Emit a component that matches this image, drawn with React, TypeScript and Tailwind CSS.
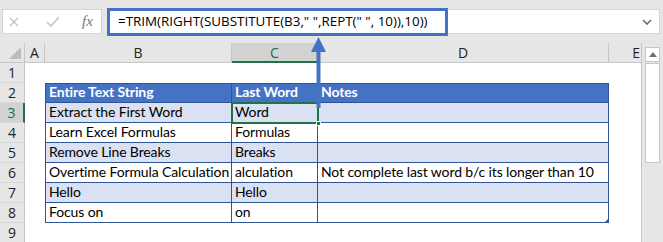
import React from "react";

type Row = {
  n: number;
  b?: string;
  c?: string;
  d?: string;
  head?: boolean;
  alt?: boolean;
};

const rows: Row[] = [
  { n: 1 },
  { n: 2, b: "Entire Text String", c: "Last Word", d: "Notes", head: true },
  { n: 3, b: "Extract the First Word", c: "Word", d: "", alt: true },
  { n: 4, b: "Learn Excel Formulas", c: "Formulas", d: "" },
  { n: 5, b: "Remove Line Breaks", c: "Breaks", d: "", alt: true },
  { n: 6, b: "Overtime Formula Calculation", c: "alculation", d: "Not complete last word b/c its longer than 10" },
  { n: 7, b: "Hello", c: "Hello", d: "", alt: true },
  { n: 8, b: "Focus on", c: "on", d: "" },
  { n: 9 },
];

function TableCell({ row, text, width, first }: { row: Row; text?: string; width: string; first?: boolean }) {
  if (text === undefined) return <div className={`${width} shrink-0`} />;
  const bg = row.head ? "bg-[#4472c4] text-white font-bold" : row.alt ? "bg-[#d9e1f2] text-black" : "bg-white text-black";
  return (
    <div
      className={`${width} shrink-0 h-full overflow-hidden whitespace-nowrap border-b border-r border-[#2f5597] ${first ? "border-l" : ""} ${row.head ? "border-t" : ""} ${bg} pl-[3px] flex items-end pb-[1px] text-[14px] tracking-[-0.12px] leading-[18px]`}
      style={{ fontFamily: "Lato, 'Liberation Sans', sans-serif" }}
    >
      {text}
    </div>
  );
}

export default function App() {
  return (
    <div className="relative w-[663px] h-[242px] overflow-hidden bg-[#e6e6e6] font-['Open_Sans',sans-serif]">
      {/* formula bar */}
      <div className="flex pt-[9px] pl-[2px] h-[43px]">
        <div className="w-[100px] h-[25px] bg-white border border-[#d6d6d6] flex items-center">
          <svg width="10" height="10" viewBox="0 0 10 10" className="ml-[6px]">
            <path d="M1 1L9 9M9 1L1 9" stroke="#c4c4c4" strokeWidth="1.4" />
          </svg>
          <svg width="14" height="11" viewBox="0 0 14 11" className="ml-[27px]">
            <path d="M1 6L5 10L13 1" stroke="#c4c4c4" strokeWidth="1.6" fill="none" />
          </svg>
          <span className="ml-[22px] text-[15px] italic text-[#777] font-['Liberation_Serif',serif] leading-none">fx</span>
        </div>
        <div className="ml-[5px] w-[553px] h-[25px] bg-white border border-[#d6d6d6] flex items-center justify-between">
          <span className="pl-[10px] text-[13.4px] text-black whitespace-nowrap">
            =TRIM(RIGHT(SUBSTITUTE(B3," ",REPT(" ", 10)),10))
          </span>
          <svg width="10" height="6" viewBox="0 0 10 6" className="mr-[7px]">
            <path d="M1 1L5 5L9 1" stroke="#6b6b6b" strokeWidth="1.6" fill="none" />
          </svg>
        </div>
      </div>

      {/* sheet */}
      <div className="flex">
        <div className="w-[642px] shrink-0">
          {/* column headers */}
          <div className="flex h-[20px] text-[14px] text-[#222]">
            <div className="w-[25px] shrink-0 border-r border-b border-[#c6c6c6] flex items-end justify-end pr-[3px] pb-[3px]">
              <svg width="12" height="12" viewBox="0 0 12 12">
                <path d="M12 0V12H0Z" fill="#bdbdbd" />
              </svg>
            </div>
            <div className="w-[20px] shrink-0 border-r border-b border-[#c6c6c6] flex items-center justify-center">A</div>
            <div className="w-[187px] shrink-0 border-r border-b border-[#c6c6c6] flex items-center justify-center">B</div>
            <div className="w-[86px] shrink-0 border-r border-[#c6c6c6] border-b-2 border-b-[#217346] bg-[#d2d2d2] text-[#1d6b3f] flex items-center justify-center">C</div>
            <div className="w-[291px] shrink-0 border-r border-b border-[#c6c6c6] flex items-center justify-center">D</div>
            <div className="w-[33px] shrink-0 border-r border-b border-[#c6c6c6] flex items-center justify-end pr-[1px] overflow-hidden">E</div>
          </div>
          {rows.map((row) => (
            <div key={row.n} className="flex h-[20px]">
              <div
                className={`w-[25px] shrink-0 border-b border-[#d8d8d8] flex items-center justify-center text-[14px] ${
                  row.n === 3 ? "bg-[#d2d2d2] text-[#1d6b3f] border-r-2 border-r-[#217346]" : "bg-[#e6e6e6] text-[#222] border-r border-r-[#c6c6c6]"
                }`}
              >
                {row.n}
              </div>
              <div className="flex flex-1 h-full bg-white border-r border-[#c6c6c6]">
                <div className="w-[20px] shrink-0" />
                <TableCell row={row} text={row.b} width="w-[187px]" first />
                <TableCell row={row} text={row.c} width="w-[86px]" />
                <TableCell row={row} text={row.d} width="w-[291px]" />
              </div>
            </div>
          ))}
        </div>
        {/* scrollbar */}
        <div className="flex-1 flex flex-col items-center pt-[4px]">
          <div className="w-[15px] h-[15px] bg-white border border-[#c6c6c6] flex items-center justify-center">
            <svg width="8" height="5" viewBox="0 0 8 5">
              <path d="M0 5L4 0L8 5Z" fill="#707070" />
            </svg>
          </div>
          <div className="mt-[1px] w-[15px] h-[100px] bg-white border border-[#c6c6c6]" />
        </div>
      </div>

      {/* annotations */}
      <div className="absolute left-[231px] top-[102px] w-[88px] h-[22px] border-2 border-[#217346]" />
      <div className="absolute left-[316px] top-[121px] w-[5px] h-[5px] bg-[#217346] border border-white" />
      <div className="absolute left-[605px] top-[218px] w-[4px] h-[4px] bg-[#2f5597]" style={{ clipPath: "polygon(100% 0,100% 100%,0 100%)" }} />
      <div className="absolute left-[107px] top-[8px] w-[341px] h-[28px] border-[3px] border-[#4472c4]" />
      <svg className="absolute left-[310px] top-[36px]" width="18" height="74" viewBox="0 0 18 74">
        <path d="M6.5 15H10.5V72H6.5Z" fill="#4472c4" />
        <path d="M8.5 1L16 16H1Z" fill="#4472c4" />
      </svg>
    </div>
  );
}
